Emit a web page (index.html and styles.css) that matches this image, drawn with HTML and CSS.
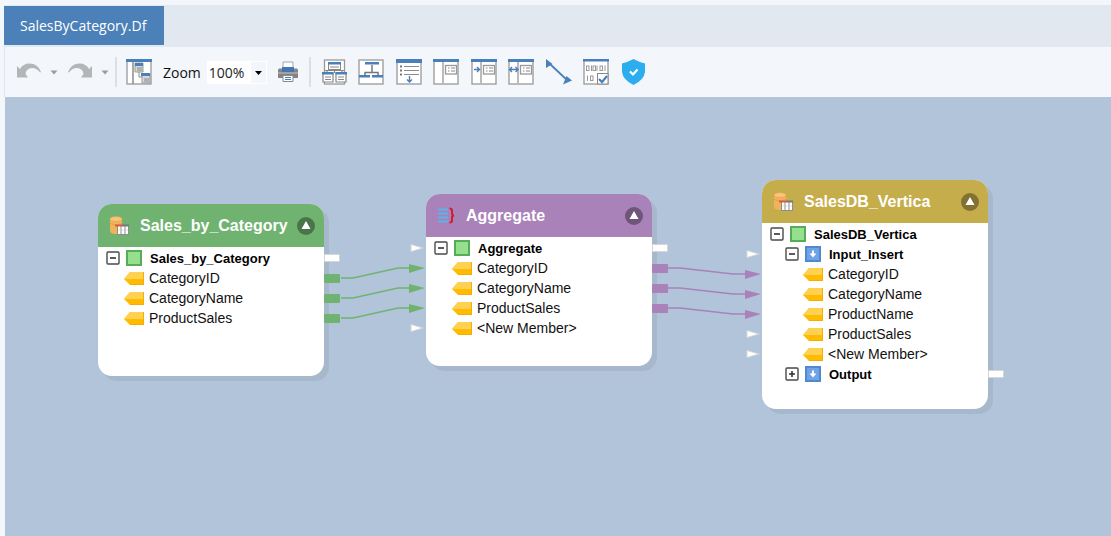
FILE: index.html
```html
<!DOCTYPE html>
<html lang="en">
<head>
<meta charset="utf-8">
<title>SalesByCategory.Df</title>
<link rel="stylesheet" href="styles.css">
</head>
<body>
<svg class="defs" aria-hidden="true">
  <symbol id="tag" viewBox="0 0 20 13">
    <path d="M6 0H20V13H6L0 7Z" fill="#fb0"/>
    <path d="M6 0H20V7H0Z" fill="#ffd152"/>
    <path d="M19 0h1v13H6v-1h13z" fill="#f4ad00"/>
  </symbol>
  <symbol id="minus" viewBox="0 0 14 14">
    <rect x="1" y="1" width="12" height="12" rx="1" fill="#fff" stroke="#4a4a4a" stroke-width="1.4"/>
    <path d="M4 7h6" stroke="#333" stroke-width="1.6"/>
  </symbol>
  <symbol id="plus" viewBox="0 0 14 14">
    <rect x="1" y="1" width="12" height="12" rx="1" fill="#fff" stroke="#4a4a4a" stroke-width="1.4"/>
    <path d="M4 7h6M7 4v6" stroke="#333" stroke-width="1.6"/>
  </symbol>
  <symbol id="group" viewBox="0 0 16 16">
    <rect x="1" y="1" width="14" height="14" fill="#94e08e" stroke="#57ad57" stroke-width="2"/>
  </symbol>
  <symbol id="port" viewBox="0 0 16 16">
    <rect x="1" y="1" width="14" height="14" fill="#6fa3e8" stroke="#5289cc" stroke-width="2"/>
    <path d="M8 4.500v4" stroke="#fff" stroke-width="2"/>
    <path d="M4.500 7.500h7L8 11.500z" fill="#fff"/>
  </symbol>
  <symbol id="database" viewBox="0 0 20 20">
    <path d="M1 3V15Q1 18 7 18Q13 18 13 15V3Z" fill="#f0b35c"/>
    <ellipse cx="7" cy="3" rx="6" ry="2.500" fill="#f7c57c" stroke="#e3a04d" stroke-width=".6"/>
    <path d="M1 7.500q6 3 12 0" fill="none" stroke="#e09a45" stroke-width=".8"/>
    <rect x="8.500" y="9.500" width="11" height="9" fill="#fff" stroke="#8d8d8d"/>
    <path d="M12 10v8M16 10v8" stroke="#8d8d8d" stroke-width="1"/>
    <path d="M9 14h10" stroke="#c4c4c4" stroke-width=".6"/>
    <path d="M6 8.500h7v2H6z" fill="#dd5a3c"/>
    <path d="M13 8.500h7v2h-7z" fill="#777"/>
  </symbol>
  <symbol id="aggregate" viewBox="0 0 18 18">
    <path d="M1 2.500h10M1 6.500h10M1 10.500h10M1 14.500h10" stroke="#5fb2e6" stroke-width="2"/>
    <path d="M12.500 1.500q2.500 0 2.500 2v2.500q0 2.500 2 2.500q-2 0-2 2.500v2.500q0 2-2.500 2" fill="none" stroke="#c9202f" stroke-width="2"/>
  </symbol>
  <symbol id="collapse" viewBox="0 0 18 18">
    <circle cx="9" cy="9" r="9" fill="#000" fill-opacity=".34"/>
    <path d="M9 4l4.500 8h-9z" fill="#fff"/>
  </symbol>
</svg>

<header class="tabs">
  <button class="tab" type="button">SalesByCategory.Df</button>
</header>

<div class="toolbar">
  <button class="tool undo" type="button" aria-label="Undo"><svg width="26" height="18" viewBox="0 0 26 18"><path d="M1 3V14.500H12L9.500 11Q10 5.500 16 5Q21 5 24 9.500L25 9Q22 .5 13.500 .5Q7 .5 4 6Z" fill="#b3b5b7"/></svg></button>
  <button class="tool drop" type="button" aria-label="Undo history"><svg width="8" height="5" viewBox="0 0 8 5"><path d="M.5.5h7L4 4.500z" fill="#9a9c9e"/></svg></button>
  <button class="tool redo" type="button" aria-label="Redo"><svg width="26" height="18" viewBox="0 0 26 18"><path d="M25 3V14.500H14L16.500 11Q16 5.500 10 5Q5 5 2 9.500L1 9Q4 .5 12.500 .5Q19 .5 22 6Z" fill="#b3b5b7"/></svg></button>
  <button class="tool drop" type="button" aria-label="Redo history"><svg width="8" height="5" viewBox="0 0 8 5"><path d="M.5.5h7L4 4.500z" fill="#9a9c9e"/></svg></button>
  <span class="separator"></span>
  <button class="tool overview" type="button" aria-label="Overview"><svg width="26" height="26" viewBox="0 0 26 26"><rect x="1" y="1" width="24" height="24" fill="#fff" stroke="#999" stroke-width="1.300"/><path d="M0 0h26v3H0z" fill="#4a80b9"/><path d="M7 3v22" stroke="#8b8b8b" stroke-width="1.500"/><path d="M9 4h8v9H9zM16 15h8v9h-8z" fill="#d8d8d8" stroke="#999"/><path d="M9 4h8v3H9zM15 14h9v3h-9z" fill="#4a80b9"/><path d="M11 9h5M11 11h5M18 20h5M18 22h5M13 13v5h3" fill="none" stroke="#888"/></svg></button>
  <label class="zoom-label" for="zoom">Zoom</label>
  <span class="zoom-box"><select id="zoom" class="zoom"><option>100%</option></select><svg class="zoom-arrow" width="15" height="21" viewBox="0 0 15 21" aria-hidden="true"><path d="M0 0h15v21H0z" fill="#f3f6fa"/><path d="M4 9h7l-3.500 4z" fill="#000"/></svg></span>
  <button class="tool print" type="button" aria-label="Print"><svg width="22" height="22" viewBox="0 0 22 22"><path d="M6 1h10v6H6z" fill="#fff" stroke="#a5a5a5"/><path d="M2 7.500h18l1 1V17H1V8.500z" fill="#858585"/><path d="M5 6h12v5H5z" fill="#3f78b5"/><path d="M1 11h20v2H1z" fill="#a2a2a2"/><path d="M6 14.500h10v6H6z" fill="#fff" stroke="#8a8a8a"/><path d="M8 16.500h6M8 18.500h6" stroke="#4a80b9"/></svg></button>
  <span class="separator"></span>
  <div class="tools">
    <button class="tool" type="button" aria-label="Auto layout"><svg width="26" height="26" viewBox="0 0 26 26"><rect x="3.500" y="1" width="20" height="24" fill="#fff" stroke="#999" stroke-width="1.300"/><rect x="7.500" y="3.500" width="12" height="7" fill="#fff" stroke="#888"/><path d="M7 3h13v2.500H7z" fill="#4a80b9"/><path d="M9 8h9M13.500 11v3M4 11.500h19M6 14v-2.500M21 14v-2.500" fill="none" stroke="#888" stroke-width="1.200"/><path d="M2 14h10v9H2zM15 14h10v9H15z" fill="#fff" stroke="#888" stroke-width="1.200"/><path d="M1 13h11.500v2.500H1zM14.500 13H26v2.500H14.500z" fill="#4a80b9"/><path d="M4 18h6M4 20.500h6M17 18h6M17 20.500h6" stroke="#888"/></svg></button>
    <button class="tool" type="button" aria-label="Hierarchy"><svg width="26" height="26" viewBox="0 0 26 26"><rect x="1" y="1" width="24" height="24" fill="#fff" stroke="#999" stroke-width="1.300"/><path d="M7 3h14v2.500H7zM1 16h11v2.500H1zM14 16h11v2.500H14z" fill="#4a80b9"/><path d="M14 6v8M7 16v-2.500h13V16" fill="none" stroke="#777" stroke-width="1.500"/></svg></button>
    <button class="tool" type="button" aria-label="Expand all"><svg width="26" height="26" viewBox="0 0 26 26"><rect x="1" y="1" width="24" height="24" fill="#fff" stroke="#999" stroke-width="1.300"/><path d="M0 0h26v4H0z" fill="#4a80b9"/><path d="M8 7.500h15M8 11.500h15M8 15.500h15" stroke="#8b8b8b" stroke-width="1.200"/><path d="M4 7.500h2M4 11.500h2M4 15.500h2" stroke="#777" stroke-width="2"/><path d="M13.500 17v6M11 20.500l2.500 2.500 2.500-2.500" fill="none" stroke="#4a80b9" stroke-width="1.400"/></svg></button>
    <button class="tool" type="button" aria-label="Left panel"><svg width="26" height="26" viewBox="0 0 26 26"><rect x="1" y="1" width="24" height="24" fill="#fff" stroke="#999" stroke-width="1.300"/><path d="M0 0h26v3H0z" fill="#4a80b9"/><path d="M10 3v22" stroke="#bbb" stroke-width="2"/><rect x="12.500" y="6.500" width="11" height="8.500" fill="#fff" stroke="#999" stroke-width="1.300"/><path d="M15 9h1.500M18 9h4M15 12h1.500M18 12h4" stroke="#888"/></svg></button>
    <button class="tool" type="button" aria-label="Fit column"><svg width="26" height="26" viewBox="0 0 26 26"><rect x="1" y="1" width="24" height="24" fill="#fff" stroke="#999" stroke-width="1.300"/><path d="M0 0h26v3H0z" fill="#4a80b9"/><path d="M10 3v22" stroke="#bbb" stroke-width="2"/><rect x="12.500" y="6.500" width="11" height="8.500" fill="#fff" stroke="#999" stroke-width="1.300"/><path d="M15 9h1.500M18 9h4M15 12h1.500M18 12h4" stroke="#888"/><path d="M3 10.500h5M6 8l2.500 2.500L6 13" fill="none" stroke="#4a80b9" stroke-width="1.400"/></svg></button>
    <button class="tool" type="button" aria-label="Fit both columns"><svg width="26" height="26" viewBox="0 0 26 26"><rect x="1" y="1" width="24" height="24" fill="#fff" stroke="#999" stroke-width="1.300"/><path d="M0 0h26v3H0z" fill="#4a80b9"/><path d="M10 3v22" stroke="#bbb" stroke-width="2"/><rect x="12.500" y="6.500" width="11" height="8.500" fill="#fff" stroke="#999" stroke-width="1.300"/><path d="M15 9h1.500M18 9h4M15 12h1.500M18 12h4" stroke="#888"/><path d="M2 10.500h7M4 8l-2.500 2.500L4 13M7.500 8L10 10.500 7.500 13" fill="none" stroke="#4a80b9" stroke-width="1.400"/></svg></button>
    <button class="tool" type="button" aria-label="Link"><svg width="26" height="26" viewBox="0 0 26 26"><path d="M4 5l18 17" stroke="#4a80b9" stroke-width="1.800"/><path d="M0 0l6.500 5L0 9zM26 21.500L17 25.500 20.500 17z" fill="#4a80b9"/></svg></button>
    <button class="tool" type="button" aria-label="Preview data"><svg width="26" height="26" viewBox="0 0 26 26"><rect x="1" y="1" width="24" height="24" fill="#fff" stroke="#999" stroke-width="1.300"/><path d="M0 0h26v2.500H0z" fill="#4a80b9"/><g fill="none" stroke="#999"><rect x="3.500" y="7" width="2.500" height="4.500"/><path d="M8.500 6.500V12M14 6.500V12M22 6.500V12M4.500 16.500V22"/><rect x="10" y="7" width="2.500" height="4.500"/><rect x="17" y="7" width="2.500" height="4.500"/><rect x="7.500" y="17" width="2.500" height="4.500"/></g><rect x="14.500" y="14.500" width="10.500" height="10.500" fill="#fff" stroke="#888"/><path d="M16 20l3 3 5-6" fill="none" stroke="#4a80b9" stroke-width="2.200"/></svg></button>
    <button class="tool" type="button" aria-label="Verify"><svg width="26" height="26" viewBox="0 0 26 26"><path d="M12.500 0Q18 3 24 4.500V13Q23 21 12.500 26Q2 21 1 13V4.500Q7 3 12.500 0Z" fill="#2badf0"/><path d="M9 12.500l3 3 4.500-5" fill="none" stroke="#fff" stroke-width="2.200"/></svg></button>
  </div>
</div>

<main class="canvas">
  <section class="node node-source">
    <header class="node-head"><svg class="node-icon"><use href="#database"/></svg><h2 class="node-title">Sales_by_Category</h2><button class="collapse" type="button" aria-label="Collapse"><svg><use href="#collapse"/></svg></button></header>
    <ul class="tree">
      <li class="row root"><button class="toggle" type="button" aria-label="Collapse"><svg><use href="#minus"/></svg></button><svg class="kind"><use href="#group"/></svg>Sales_by_Category<i class="out"></i></li>
      <li class="row leaf"><svg class="tag"><use href="#tag"/></svg>CategoryID<i class="out linked"></i></li>
      <li class="row leaf"><svg class="tag"><use href="#tag"/></svg>CategoryName<i class="out linked"></i></li>
      <li class="row leaf"><svg class="tag"><use href="#tag"/></svg>ProductSales<i class="out linked"></i></li>
    </ul>
  </section>

  <section class="node node-aggregate">
    <header class="node-head"><svg class="node-icon"><use href="#aggregate"/></svg><h2 class="node-title">Aggregate</h2><button class="collapse" type="button" aria-label="Collapse"><svg><use href="#collapse"/></svg></button></header>
    <ul class="tree">
      <li class="row root"><svg class="in" viewBox="0 0 14 8"><path d="M1 .5l12 3.500-12 3.500z"/></svg><button class="toggle" type="button" aria-label="Collapse"><svg><use href="#minus"/></svg></button><svg class="kind"><use href="#group"/></svg>Aggregate<i class="out"></i></li>
      <li class="row leaf"><svg class="tag"><use href="#tag"/></svg>CategoryID<i class="out linked"></i></li>
      <li class="row leaf"><svg class="tag"><use href="#tag"/></svg>CategoryName<i class="out linked"></i></li>
      <li class="row leaf"><svg class="tag"><use href="#tag"/></svg>ProductSales<i class="out linked"></i></li>
      <li class="row leaf"><svg class="in" viewBox="0 0 14 8"><path d="M1 .5l12 3.500-12 3.500z"/></svg><svg class="tag"><use href="#tag"/></svg>&lt;New Member&gt;</li>
    </ul>
  </section>

  <section class="node node-target">
    <header class="node-head"><svg class="node-icon"><use href="#database"/></svg><h2 class="node-title">SalesDB_Vertica</h2><button class="collapse" type="button" aria-label="Collapse"><svg><use href="#collapse"/></svg></button></header>
    <ul class="tree">
      <li class="row root"><button class="toggle" type="button" aria-label="Collapse"><svg><use href="#minus"/></svg></button><svg class="kind"><use href="#group"/></svg>SalesDB_Vertica</li>
      <li class="row root nested"><svg class="in" viewBox="0 0 14 8"><path d="M1 .5l12 3.500-12 3.500z"/></svg><button class="toggle" type="button" aria-label="Collapse"><svg><use href="#minus"/></svg></button><svg class="kind"><use href="#port"/></svg>Input_Insert</li>
      <li class="row leaf nested"><svg class="tag"><use href="#tag"/></svg>CategoryID</li>
      <li class="row leaf nested"><svg class="tag"><use href="#tag"/></svg>CategoryName</li>
      <li class="row leaf nested"><svg class="tag"><use href="#tag"/></svg>ProductName</li>
      <li class="row leaf nested"><svg class="in" viewBox="0 0 14 8"><path d="M1 .5l12 3.500-12 3.500z"/></svg><svg class="tag"><use href="#tag"/></svg>ProductSales</li>
      <li class="row leaf nested"><svg class="in" viewBox="0 0 14 8"><path d="M1 .5l12 3.500-12 3.500z"/></svg><svg class="tag"><use href="#tag"/></svg>&lt;New Member&gt;</li>
      <li class="row root nested"><button class="toggle" type="button" aria-label="Expand"><svg><use href="#plus"/></svg></button><svg class="kind"><use href="#port"/></svg>Output<i class="out"></i></li>
    </ul>
  </section>

  <svg class="links" aria-hidden="true">
    <g class="link-green">
      <path class="wire" d="M336 181h12l45-10h12M336 201h12l45-10h12M336 221h12l45-10h12"/>
      <path class="head" d="M404 167l16 4-16 5zM404 187l16 4-16 5zM404 207l16 4-16 5z"/>
    </g>
    <g class="link-purple">
      <path class="wire" d="M663 171h12l53 6h14M663 191h12l53 6h14M663 211h12l53 6h14"/>
      <path class="head" d="M740 173l16 4-16 5zM740 193l16 4-16 5zM740 213l16 4-16 5z"/>
    </g>
  </svg>
</main>
</body>
</html>
```
FILE: styles.css
```css
* { box-sizing: border-box; }
body {
  margin: 0;
  padding: 5px 0 0 4px;
  min-height: 100vh;
  display: flex;
  flex-direction: column;
  background: #f3f6fa;
  font-family: "Open Sans", "Noto Sans", sans-serif;
  font-size: 14px;
  color: #111;
}
button { border: 0; padding: 0; background: none; font: inherit; color: inherit; }
svg { display: block; }
.defs { position: absolute; width: 0; height: 0; }

.tabs { display: flex; height: 42px; padding: 1px 0 2px; background: #e1e8f0; }
.tab { padding: 0 18px 0 16px; background: #4b80b8; color: #fff; font-size: 14px; }

.toolbar {
  display: flex;
  align-items: center;
  height: 50px;
  padding-left: 11px;
  border-left: 1px solid #dde4ec;
  background: #f3f6fa;
}
.drop { margin: 0 6px 0 8px; }
.redo { margin-left: 3px; }
.separator { width: 2px; height: 30px; background: #dcdfe3; }
.overview { margin: 0 11px 0 9px; }
.zoom-box { position: relative; display: flex; align-items: center; width: 60px; height: 23px; margin-left: 6px; background: #fff; }
.zoom { appearance: none; width: 100%; border: 0; padding: 0 0 0 2px; background: none; font: inherit; color: #222; }
.zoom-arrow { position: absolute; right: 1px; pointer-events: none; }
.print { margin: 0 10px; }
.tools { display: flex; justify-content: space-between; width: 326px; margin-left: 10px; }

.canvas {
  position: relative;
  flex: 1;
  min-height: 439px;
  margin-left: 1px;
  overflow: hidden;
  background: #b2c4d9;
}
.node {
  position: absolute;
  width: 226px;
  border-radius: 14px;
  background: #fff;
  box-shadow: 5px 5px 0 #a7b8cd;
  font-family: "Liberation Sans", Arial, sans-serif;
}
.node-source { left: 93px; top: 107px; --accent: #70b370; }
.node-aggregate { left: 421px; top: 97px; --accent: #a982b9; }
.node-target { left: 757px; top: 83px; --accent: #c6ad4b; }
.node-head {
  display: flex;
  align-items: center;
  height: 43px;
  padding: 0 9px 0 11px;
  border-radius: 14px 14px 0 0;
  background: var(--accent);
}
.node-icon { width: 20px; height: 20px; margin-right: 11px; }
.node-aggregate .node-icon { width: 18px; height: 18px; }
.node-title { flex: 1; margin: 0; color: #fff; font-size: 16px; line-height: 20px; }
.collapse svg { width: 18px; height: 18px; }
.tree { margin: 0; padding: 1px 0 48px; list-style: none; }
.node-aggregate .tree { padding-bottom: 28px; }
.node-target .tree { padding-bottom: 25px; }
.row { position: relative; display: flex; align-items: center; height: 20px; white-space: pre; font-size: 14px; }
.root { padding-left: 8px; font-size: 13px; font-weight: bold; color: #000; }
.leaf { padding-left: 26px; }
.root.nested { padding-left: 23px; }
.leaf.nested { padding-left: 41px; }
.toggle { margin-right: 6px; }
.toggle svg { width: 14px; height: 14px; }
.kind { width: 16px; height: 16px; margin-right: 8px; }
.tag { width: 20px; height: 13px; margin-right: 5px; }
.out {
  position: absolute;
  left: 100%;
  top: 6px;
  width: 16px;
  height: 8px;
  border: 1px solid #d5d5d5;
  background: #fff;
}
.out.linked { height: 9px; border: 0; border-radius: 1px; background: var(--accent); }
.in { position: absolute; left: -16px; top: 6px; width: 14px; height: 8px; fill: #fff; stroke: #d5d5d5; }
.links { position: absolute; inset: 0; width: 100%; height: 100%; pointer-events: none; }
.wire { fill: none; stroke: currentColor; stroke-width: 1.5; }
.head { fill: currentColor; }
.link-green { color: #70b370; }
.link-purple { color: #a982b9; }
```
